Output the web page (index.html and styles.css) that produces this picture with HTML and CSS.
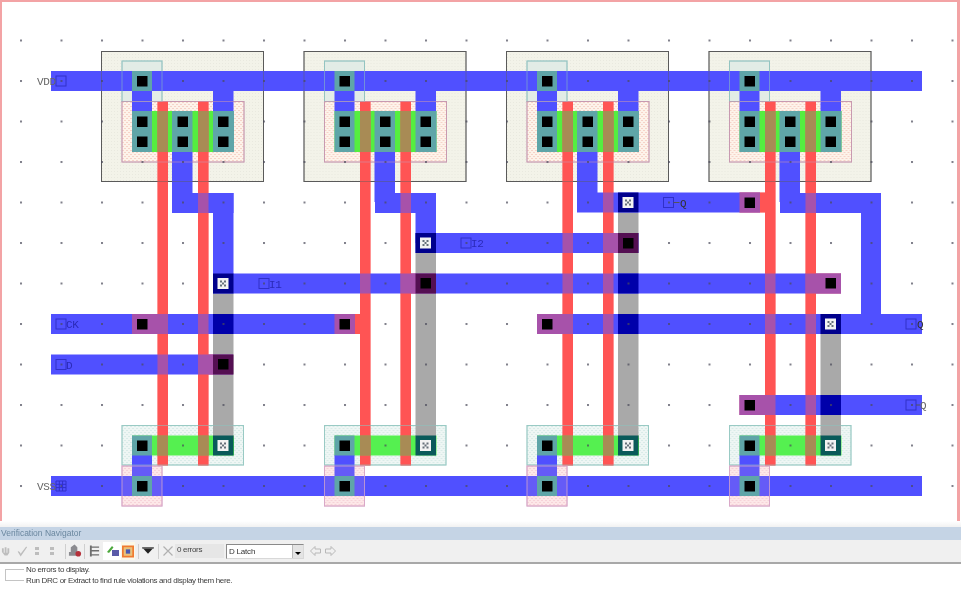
FILE: index.html
```html
<!DOCTYPE html>
<html lang="en">
<head>
<meta charset="utf-8">
<title>D Latch layout</title>
<link rel="stylesheet" href="styles.css">
</head>
<body>
<main class="app">
<div class="stage">
<svg class="layout" width="961" height="521" viewBox="0 0 961 521" xmlns="http://www.w3.org/2000/svg">
  <defs>
    <pattern id="dots" patternUnits="userSpaceOnUse" x="20" y="-1" width="40.5" height="40.5"><rect width="2" height="2" fill="#4a4a5a" fill-opacity=".7"/></pattern>
    <pattern id="wellfill" patternUnits="userSpaceOnUse" width="3" height="3"><rect width="3" height="3" fill="#f3f3e9"/><rect width="1" height="1" fill="#e9e9df"/></pattern>
    <pattern id="pinkfill" patternUnits="userSpaceOnUse" width="4" height="4"><rect width="4" height="4" fill="#fdf3ea"/><rect width="2" height="1" fill="#f6d3c8"/><rect x="2" y="2" width="2" height="1" fill="#f6d3c8"/></pattern>
    <pattern id="rosefill" patternUnits="userSpaceOnUse" width="4" height="4"><rect width="4" height="4" fill="#fdf0ee"/><rect width="2" height="1" fill="#f5d8dc"/><rect x="2" y="2" width="2" height="1" fill="#f5d8dc"/></pattern>
    <pattern id="tealfill" patternUnits="userSpaceOnUse" width="4" height="4"><rect width="4" height="4" fill="#eef6f4"/><rect width="2" height="1" fill="#d9ebe8"/><rect x="2" y="2" width="2" height="1" fill="#d9ebe8"/></pattern>
    <g id="cellBase">
      <rect class="well" x="101.5" y="51.5" width="162" height="130" fill="url(#wellfill)"/>
      <rect class="tap" x="122" y="61" width="40" height="40.500"/>
      <rect class="select" x="122" y="101.500" width="122" height="60.500" fill="url(#pinkfill)"/>
      <rect class="boxn" x="122" y="425.500" width="121.500" height="39.500" fill="url(#tealfill)"/>
      <rect class="boxp" x="122" y="466" width="40" height="40" fill="url(#rosefill)"/>
    </g>
    <g id="cellPoly">
      <rect x="157.500" y="101.500" width="10.500" height="364"/>
      <rect x="198" y="101.500" width="10.500" height="364"/>
    </g>
    <g id="cellActive">
      <rect class="active" x="132" y="111" width="102" height="41"/>
      <rect class="active low" x="132" y="435.500" width="102" height="20"/>
    </g>
    <g id="cellGate" class="gate">
      <rect x="157.500" y="111" width="10.500" height="41"/>
      <rect x="198" y="111" width="10.500" height="41"/>
      <rect x="157.500" y="435.500" width="10.500" height="20"/>
      <rect x="198" y="435.500" width="10.500" height="20"/>
    </g>
    <g id="cellMetal" class="m1">
      <rect x="132" y="91" width="20" height="20"/>
      <rect x="213" y="91" width="20.500" height="20"/>
      <rect x="172" y="152" width="20.500" height="50"/>
      <rect x="132" y="455" width="20" height="21"/>
    </g>
    <g id="cellEdges">
      <rect class="edge-well" x="101.5" y="51.5" width="162" height="130"/>
      <rect class="edge-tap" x="122" y="61" width="40" height="40.500"/>
      <rect class="edge-select" x="122" y="101.500" width="122" height="60.500"/>
      <rect class="edge-tap" x="122" y="425.500" width="121.500" height="39.500"/>
      <rect class="edge-rose" x="122" y="466" width="40" height="40"/>
    </g>
    <g id="cellContacts">
      <rect class="teal" x="132" y="71" width="20" height="20"/>
      <rect class="teal" x="132" y="111" width="20" height="41"/>
      <rect class="teal" x="172" y="111" width="20.500" height="41"/>
      <rect class="teal" x="213" y="111" width="21" height="41"/>
      <rect class="teal" x="132" y="435.500" width="20" height="20"/>
      <rect class="teal" x="132" y="476" width="20" height="20"/>
      <rect class="hole" x="137" y="76" width="10.500" height="10.500"/>
      <rect class="hole" x="137" y="116.500" width="10.500" height="10.500"/>
      <rect class="hole" x="137" y="136.500" width="10.500" height="10.500"/>
      <rect class="hole" x="177.500" y="116.500" width="10.500" height="10.500"/>
      <rect class="hole" x="177.500" y="136.500" width="10.500" height="10.500"/>
      <rect class="hole" x="218" y="116.500" width="10.500" height="10.500"/>
      <rect class="hole" x="218" y="136.500" width="10.500" height="10.500"/>
      <rect class="hole" x="137" y="440.500" width="10.500" height="10.500"/>
      <rect class="hole" x="137" y="481" width="10.500" height="10.500"/>
      <rect class="darkteal" x="213" y="435.500" width="20.500" height="20"/>
      <use href="#viaMark" x="223" y="445.500"/>
    </g>
    <g id="viaMark">
      <rect class="viawhite" x="-5.500" y="-5.500" width="11" height="11"/>
      <path class="viaspeck" d="M-3-3h2v2h-2zM1-3h2v2h-2zM-1-1h2v2h-2zM-3 1h2v2h-2zM1 1h2v2h-2z"/>
    </g>
    <g id="stubs">
      <rect x="132" y="314" width="36" height="20"/>
      <rect x="334.500" y="314" width="26" height="20"/>
      <rect x="198" y="354.500" width="35" height="20"/>
      <rect x="400.500" y="273.500" width="35" height="20"/>
      <rect x="537" y="314" width="35" height="20"/>
      <rect x="603" y="233" width="35" height="20"/>
      <rect x="739.500" y="192.500" width="26" height="20"/>
      <rect x="805.500" y="273.500" width="35.500" height="20"/>
      <rect x="739.500" y="395" width="35" height="20"/>
    </g>
  </defs>

  <use href="#cellBase"/><use href="#cellBase" x="202.500"/><use href="#cellBase" x="405"/><use href="#cellBase" x="607.500"/>

  <g class="poly">
    <use href="#cellPoly"/><use href="#cellPoly" x="202.500"/><use href="#cellPoly" x="405"/><use href="#cellPoly" x="607.500"/>
    <use href="#stubs"/>
  </g>

  <use href="#cellActive"/><use href="#cellActive" x="202.500"/><use href="#cellActive" x="405"/><use href="#cellActive" x="607.500"/>
  <use href="#cellGate"/><use href="#cellGate" x="202.500"/><use href="#cellGate" x="405"/><use href="#cellGate" x="607.500"/>

  <g class="m2">
    <rect x="213" y="293" width="20.500" height="145"/>
    <rect x="415.500" y="253" width="20.500" height="185"/>
    <rect x="618" y="213" width="20.500" height="225"/>
    <rect x="820.500" y="334" width="20.500" height="104"/>
  </g>

  <use href="#cellMetal"/><use href="#cellMetal" x="202.500"/><use href="#cellMetal" x="405"/><use href="#cellMetal" x="607.500"/>
  <g class="m1">
    <rect x="51" y="71" width="871" height="20"/>
    <rect x="51" y="476" width="871" height="20"/>
    <rect x="51" y="314" width="304" height="20"/>
    <rect x="537" y="314" width="385" height="20"/>
    <rect x="51" y="354.500" width="182" height="20"/>
    <rect x="213" y="273.500" width="628" height="20"/>
    <rect x="415.500" y="233" width="223" height="20"/>
    <rect x="577" y="192.500" width="183" height="20"/>
    <rect x="739.500" y="395" width="182.500" height="20"/>
    <rect x="172" y="193" width="61.500" height="20"/>
    <rect x="213" y="193" width="20.500" height="90"/>
    <rect x="375" y="193" width="61" height="20"/>
    <rect x="415.500" y="193" width="20.500" height="50"/>
    <rect x="780" y="193" width="101" height="20"/>
    <rect x="861" y="193" width="20" height="131"/>
  </g>

  <g class="poly veil">
    <use href="#cellPoly"/><use href="#cellPoly" x="202.500"/><use href="#cellPoly" x="405"/><use href="#cellPoly" x="607.500"/>
    <use href="#stubs"/>
  </g>
  <use href="#cellGate"/><use href="#cellGate" x="202.500"/><use href="#cellGate" x="405"/><use href="#cellGate" x="607.500"/>

  <g class="cross">
    <rect x="213" y="314" width="20.500" height="20"/>
    <rect x="618" y="273.500" width="20.500" height="20"/>
    <rect x="618" y="314" width="20.500" height="20"/>
    <rect x="820.500" y="395" width="20.500" height="20"/>
  </g>

  <use href="#cellEdges"/><use href="#cellEdges" x="202.500"/><use href="#cellEdges" x="405"/><use href="#cellEdges" x="607.500"/>

  <rect class="gridlayer" width="961" height="500" fill="url(#dots)"/>

  <use href="#cellContacts"/><use href="#cellContacts" x="202.500"/><use href="#cellContacts" x="405"/><use href="#cellContacts" x="607.500"/>

  <g class="purplepad">
    <rect x="213" y="354.500" width="20.500" height="20"/>
    <rect x="415.500" y="273.500" width="20.500" height="20"/>
    <rect x="618" y="233" width="20.500" height="20"/>
  </g>
  <g class="hole">
    <rect x="218" y="359" width="10.500" height="10.500"/>
    <rect x="420.500" y="278" width="10.500" height="10.500"/>
    <rect x="623" y="238" width="10.500" height="10.500"/>
    <rect x="137" y="319" width="10.500" height="10.500"/>
    <rect x="339.500" y="319" width="10.500" height="10.500"/>
    <rect x="542" y="319" width="10.500" height="10.500"/>
    <rect x="744.500" y="197.500" width="10.500" height="10.500"/>
    <rect x="825.500" y="278" width="10.500" height="10.500"/>
    <rect x="744.500" y="400" width="10.500" height="10.500"/>
  </g>

  <g class="navy">
    <rect x="213" y="273.500" width="20.500" height="20"/>
    <rect x="415.500" y="233" width="20.500" height="20"/>
    <rect x="618" y="192.500" width="20.500" height="20"/>
    <rect x="820.500" y="314" width="20.500" height="20"/>
  </g>
  <use href="#viaMark" x="223" y="283.500"/>
  <use href="#viaMark" x="425.500" y="243"/>
  <use href="#viaMark" x="628" y="202.500"/>
  <use href="#viaMark" x="830.500" y="324"/>

  <g class="pins">
    <rect x="56" y="76" width="10" height="10"/>
    <rect x="56" y="319" width="10" height="10"/>
    <rect x="56" y="359.500" width="10" height="10"/>
    <rect x="259" y="278.500" width="10" height="10"/>
    <rect x="461" y="238" width="10" height="10"/>
    <rect x="663.500" y="197.500" width="10" height="10"/>
    <rect x="906" y="319" width="10" height="10"/>
    <rect x="906" y="400" width="10" height="10"/>
    <path d="M56 481h10v10h-10zM56 484.300h10M56 487.600h10M59.300 481v10M62.600 481v10"/>
    <path class="tie" d="M673.500 202.500h6M916 405h4"/>
  </g>

  <g class="labels">
    <text class="pale" x="37" y="85">VDD</text>
    <text class="pale" x="37" y="490">VSS</text>
    <text x="66" y="328">CK</text>
    <text x="66" y="369">D</text>
    <text x="269" y="288">I1</text>
    <text x="471" y="247">I2</text>
    <text class="deep" x="680" y="207">Q</text>
    <text class="deep" x="917" y="328">Q</text>
    <text class="pale" x="920" y="409">Q</text>
  </g>
</svg>
</div>

<section class="navigator">
  <h2 class="nav-title">Verification Navigator</h2>
  <div class="toolbar">
    <svg class="tool ml-1" width="11" height="12" viewBox="0 0 12 12"><path class="ghost" d="M1 3h2v5h1V2h2v6h1V3h2v5l-2 3H4L1 7z"/></svg>
    <svg class="tool ml-5" width="11" height="12" viewBox="0 0 12 12"><path class="ghost" d="M1 6l2 1 1 2 6-8 1 1-7 10-3-5z"/></svg>
    <svg class="tool ml-5" width="8" height="12" viewBox="0 0 8 12"><path class="ghost" d="M2 2h4v3H2zM2 7h4v3H2z"/></svg>
    <svg class="tool ml-7" width="8" height="12" viewBox="0 0 8 12"><path class="ghost" d="M2 2h4v3H2zM2 7h4v3H2z"/></svg>
    <span class="sep ml-9"></span>
    <svg class="tool ml-2" width="14" height="14" viewBox="0 0 15 14"><path fill="#8b8b90" d="M3 3l4-3 3 3v5H3zM1 8h10v4H1z"/><circle cx="11" cy="10" r="3" fill="#b5303a"/></svg>
    <span class="sep ml-2"></span>
    <svg class="tool ml-4" width="11" height="12" viewBox="0 0 12 12"><path fill="#6e6e6e" d="M1 0h2v12H1zM3 1h8v1.500H3zM3 5h8v1.500H3zM3 9.500h8V11H3z"/></svg>
    <span class="pressed wide ml-3"><svg width="13" height="12" viewBox="0 0 13 12"><path fill="#4ca83c" d="M1 7l5-6 1.500 1.500L3 8z"/><rect x="6" y="5" width="7" height="6" fill="#5a5aa8"/></svg></span>
    <span class="pressed"><svg width="12" height="13" viewBox="0 0 14 14"><rect width="14" height="14" fill="#f07a30"/><rect x="2" y="2" width="10" height="10" fill="#e9c27a"/><rect x="4.500" y="4.500" width="5" height="5" fill="#4b5ab0"/></svg></span>
    <span class="sep ml-3"></span>
    <svg class="tool ml-3" width="12" height="8" viewBox="0 0 13 8"><path fill="#222" d="M0 0h13L6.500 7z"/><rect y="0" width="13" height="1.500" fill="#777"/></svg>
    <span class="sep ml-4"></span>
    <svg class="tool ml-4" width="10" height="10" viewBox="0 0 10 10"><path stroke="#b0b0b0" stroke-width="1.200" fill="none" d="M.5.500l9 9M9.500.500l-9 9"/></svg>
    <span class="count ml-2">0 errors</span>
    <div class="picker ml-2"><span class="picker-text">D Latch</span><span class="picker-btn"><i class="picker-arrow"></i></span></div>
    <svg class="tool ml-6" width="11" height="10" viewBox="0 0 11 10"><path class="outline" d="M.5 5L5 .5V3h5.500v4H5v2.500z"/></svg>
    <svg class="tool ml-4" width="11" height="10" viewBox="0 0 11 10"><path class="outline" d="M10.500 5L6 .5V3H.5v4H6v2.500z"/></svg>
  </div>
  <div class="messages">
    <span class="tree"></span>
    <div class="message-text">
      <p>No errors to display.</p>
      <p>Run DRC or Extract to find rule violations and display them here.</p>
    </div>
  </div>
</section>
</main>
</body>
</html>
```

FILE: styles.css
```css
html, body { margin: 0; padding: 0; background: #fff; }
body { width: 961px; height: 600px; overflow: hidden; font-family: "Liberation Sans", Arial, sans-serif; }
.app { display: flex; flex-direction: column; width: 961px; height: 600px; }

.stage { height: 521px; box-sizing: border-box; border-top: 2px solid #f3a3a5; border-left: 2px solid #f3a3a5; margin-right: 1px; position: relative; overflow: hidden; }
.stage::after { content: ""; position: absolute; top: 0; right: 0; bottom: 0; width: 3px; background: #f3a3a5; }
.layout { display: block; margin: -2px 0 0 -2px; filter: blur(.45px); }

.well { stroke: #5a5a5a; stroke-width: 1; }
.tap { fill: #e2ece6; stroke: #9cc6c6; stroke-width: 1; }
.select { stroke: #c8a0b4; stroke-width: 1; }
.boxn { stroke: #a8d2cc; stroke-width: 1; }
.boxp { stroke: #d8a8c8; stroke-width: 1; }
.edge-well { fill: none; stroke: rgba(90, 90, 90, .45); stroke-width: 1; }
.edge-tap { fill: none; stroke: rgba(140, 195, 190, .55); stroke-width: 1; }
.edge-select { fill: none; stroke: rgba(200, 150, 175, .55); stroke-width: 1; }
.edge-rose { fill: rgba(255, 170, 190, .12); stroke: rgba(216, 168, 200, .75); stroke-width: 1; }
.poly { fill: #ff5555; }
.veil { opacity: .5; }
.active { fill: #55ee40; }
.active.low { fill: #55f050; }
.gate { fill: #a88b55; }
.m2 { fill: #a9a9a9; }
.m1 { fill: #5050ff; }
.cross, .navy { fill: #0000aa; }
.navy { fill: #00008c; }
.teal { fill: #5fa5a8; }
.darkteal { fill: #0a5a5a; }
.hole { fill: #000; }
.purplepad { fill: #540f52; }
.viawhite { fill: #f2f2f2; }
.viaspeck { fill: #66707a; }
.pins rect, .pins path { fill: none; stroke: #3030c8; stroke-width: 1; }
.pins .tie { stroke: #555; }
.labels text { font-family: "Liberation Mono", monospace; font-size: 11px; fill: #2a2ab8; letter-spacing: -.4px; }
.labels .pale { fill: #666; }
.labels .deep { fill: #333; }

.navigator { flex: 1; display: flex; flex-direction: column; filter: blur(.5px); padding-top: 6px; background: linear-gradient(#fff, #f2f2f2 6px); }
.nav-title { margin: 0; height: 13px; line-height: 13px; padding-left: 1px; font-size: 8.500px; font-weight: normal; color: #6a879f; background: #c5d4e5; }
.toolbar { height: 22px; display: flex; align-items: center; background: #f0f0f0; border-bottom: 2px solid #a8a8a8; }
.tool { flex: none; }
.ml-1 { margin-left: 1px; }
.ml-2 { margin-left: 2px; }
.ml-3 { margin-left: 3px; }
.ml-4 { margin-left: 4px; }
.ml-5 { margin-left: 5px; }
.ml-6 { margin-left: 6px; }
.ml-7 { margin-left: 7px; }
.ml-9 { margin-left: 9px; }
.ghost { fill: #bdbdbd; }
.sep { flex: none; width: 1px; height: 15px; background: #cfcfcf; }
.pressed { flex: none; display: flex; align-items: center; justify-content: center; width: 14px; height: 18px; background: #fbf8e8; }
.pressed.wide { width: 18px; background: #fff; }
.count { flex: none; box-sizing: border-box; width: 49px; height: 14px; line-height: 12px; padding-left: 2px; font-size: 8px; letter-spacing: -.3px; color: #444; background: #e6e6e6; }
.picker { flex: none; display: flex; align-items: center; justify-content: space-between; box-sizing: border-box; width: 78px; height: 15px; background: #fff; border: 1px solid #8a8a8a; border-right-color: #d8d8d8; border-bottom-color: #d8d8d8; }
.picker-text { padding-left: 2px; font-size: 8px; letter-spacing: -.2px; color: #333; }
.picker-btn { display: flex; align-items: flex-end; justify-content: center; width: 10px; height: 13px; background: #e4e4e4; border-left: 1px solid #bbb; }
.picker-arrow { width: 0; height: 0; margin-bottom: 3px; border: 3px solid transparent; border-top-color: #000; border-bottom: 0; }
.outline { fill: #f0f0f0; stroke: #b8b8b8; stroke-width: 1; }

.messages { flex: 1; display: flex; align-items: flex-start; background: #fff; padding: 0 0 0 5px; }
.tree { flex: none; box-sizing: border-box; width: 19px; height: 12px; margin-top: 5px; border: 1px solid #c4c4c4; border-right: 0; }
.message-text { margin-left: 2px; font-size: 8px; line-height: 11px; letter-spacing: -.35px; color: #3c3c3c; }
.message-text p { margin: 0; white-space: nowrap; }
```
